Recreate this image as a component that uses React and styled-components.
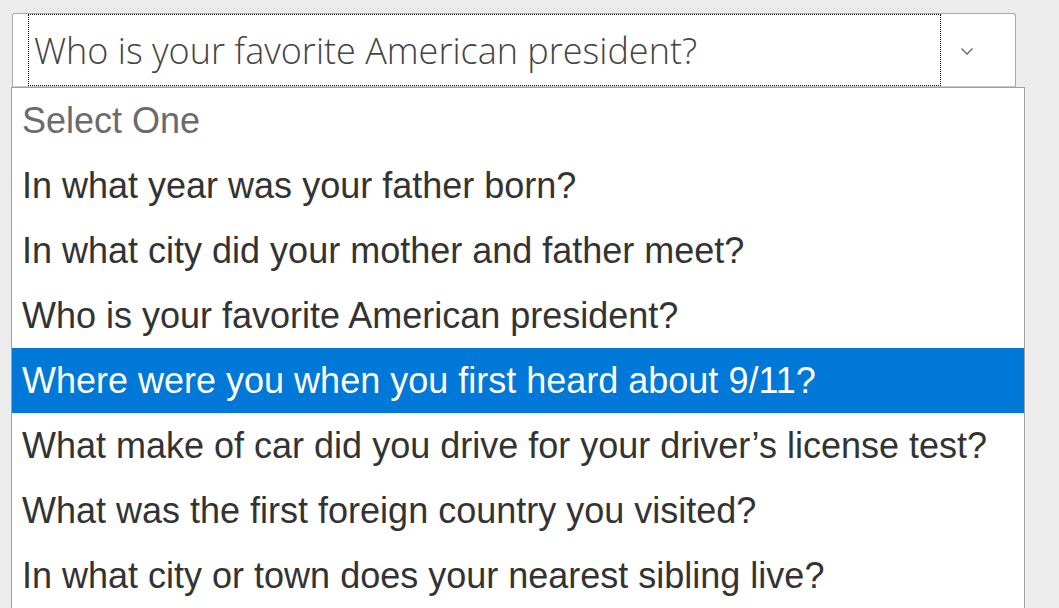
import React from "react";
import styled, { createGlobalStyle } from "styled-components";

const GlobalStyle = createGlobalStyle`
  html, body {
    margin: 0;
    padding: 0;
    background: #ececec;
    overflow: hidden;
  }
`;

const Page = styled.div`
  padding: 13px 0 0 12px;
  height: 608px;
  box-sizing: border-box;
  overflow: hidden;
`;

const SelectBox = styled.div`
  width: 1004px;
  height: 74px;
  box-sizing: border-box;
  display: flex;
  align-items: center;
  background: #fff;
  border: 1px solid #a9a9a9;
  border-bottom-color: #c8c8c8;
  border-radius: 3px 3px 0 0;
  padding-left: 15px;
`;

const Field = styled.div`
  width: 913px;
  height: 72px;
  box-sizing: border-box;
  outline: 1px dotted #111;
  outline-offset: -1px;
  display: flex;
  align-items: center;
  padding-left: 6px;
  font-family: "Open Sans", sans-serif;
  font-weight: 300;
  font-size: 36px;
  color: #444;
  white-space: nowrap;
`;

const Chevron = styled.svg`
  margin-left: 19px;
  margin-top: 2px;
`;

const List = styled.ul`
  list-style: none;
  margin: 0 0 0 -1px;
  padding: 0;
  width: 1014px;
  height: 521px;
  overflow: hidden;
  box-sizing: border-box;
  background: #fff;
  border: 1px solid #a0a0a0;
  border-bottom: none;
`;

const Option = styled.li`
  height: 65px;
  line-height: 65px;
  padding-left: 10px;
  font-family: "Liberation Sans", Arial, sans-serif;
  font-size: 36px;
  white-space: nowrap;
  color: ${(p) => (p.$active ? "#fff" : p.$placeholder ? "#6b6b6b" : "#333")};
  background: ${(p) => (p.$active ? "#0078d7" : "transparent")};
`;

const options = [
  "Select One",
  "In what year was your father born?",
  "In what city did your mother and father meet?",
  "Who is your favorite American president?",
  "Where were you when you first heard about 9/11?",
  "What make of car did you drive for your driver\u2019s license test?",
  "What was the first foreign country you visited?",
  "In what city or town does your nearest sibling live?",
];

export default function App() {
  return (
    <>
      <GlobalStyle />
      <Page>
        <SelectBox>
          <Field>Who is your favorite American president?</Field>
          <Chevron width="14" height="9" viewBox="0 0 14 9">
            <path d="M1.5 1.5 L7 7 L12.5 1.5" fill="none" stroke="#7a7a7a" strokeWidth="1.6" />
          </Chevron>
        </SelectBox>
        <List>
          {options.map((o, i) => (
            <Option key={i} $placeholder={i === 0} $active={i === 4}>
              {o}
            </Option>
          ))}
        </List>
      </Page>
    </>
  );
}
